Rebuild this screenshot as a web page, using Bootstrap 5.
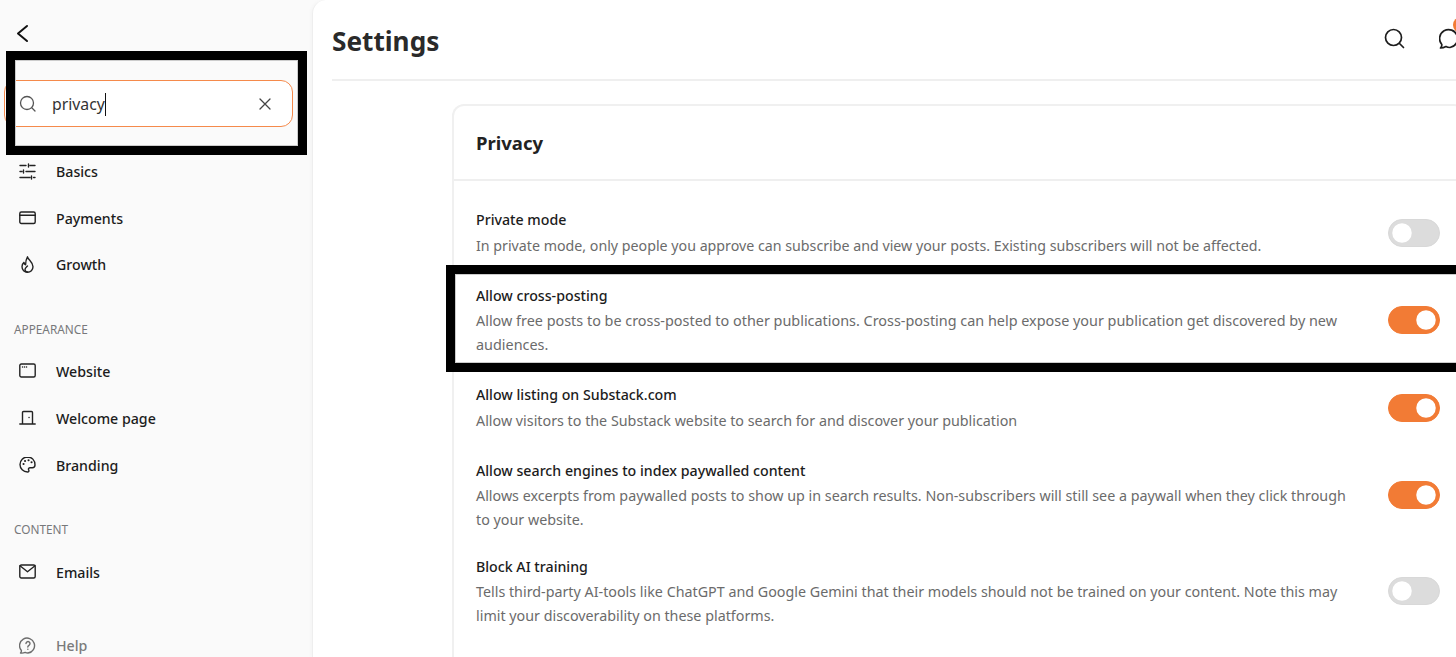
<!doctype html>
<html lang="en">
<head>
<meta charset="utf-8">
<title>Settings</title>
<link href="https://cdn.jsdelivr.net/npm/bootstrap@5.3.0/dist/css/bootstrap.min.css" rel="stylesheet">
<style>
html,body{height:657px;overflow:hidden}
body{font-family:"Noto Sans","Open Sans",sans-serif;background:#fafafa;color:#1f1f1f;position:relative}
.shell{height:657px}
.side{width:312px;flex:none;background:#fafafa;padding-top:22px}
.back{height:22px;padding-left:15px;line-height:0}
.searchbar{margin:36px 19px 0 4px;height:47px;background:#fff;border:1px solid #f58a4b;border-radius:12px;padding-left:14px;padding-right:20px;color:#333;font-size:15.8px}
.searchbar .q{margin-left:15px;padding-top:2px}
.caret-line{display:inline-block;width:1px;height:23px;background:#111;vertical-align:-6px}
.menu{margin-top:21.5px}
.mi{height:46.5px;padding-left:19px;font-size:14.2px;font-weight:500;color:#1c1c1c;gap:20px;text-decoration:none}
.nv-b .mi{height:47px}
.mi svg{width:17px;height:17px;flex:none;stroke:#222;fill:none;stroke-width:1.4;stroke-linecap:round;stroke-linejoin:round}
.sec{font-size:11.8px;color:#77787a;padding-left:14px;line-height:16px}
.sec-a{margin-top:33px;margin-bottom:11.4px}
.sec-c{margin-top:31.6px;margin-bottom:12px}
.mi.help{color:#7a7a7a;margin-top:27px}
.mi.help svg{stroke:#6d6d6d}
.mainp{flex:none;width:1144px;background:#fff;border-left:1px solid #eee;border-top-left-radius:14px;box-shadow:-2px 0 3px rgba(0,0,0,.02);padding:0 0 0 19px;height:657px;overflow:hidden}
.head{height:81px;border-bottom:2px solid #efefef;padding-top:20px}
.head h1{font-size:26.2px;font-weight:700;margin:0;color:#2a2a2a;line-height:42px}
.head-ic{position:absolute;top:28px;left:1384px;display:flex;gap:34px}
.head-ic svg{width:21px;height:21px;flex:none;fill:none;stroke:#1d1d1d;stroke-width:1.7;stroke-linecap:round;stroke-linejoin:round}
.dot{position:absolute;left:1453px;top:17px;width:16px;height:16px;border-radius:50%;background:#f27b35}
.panel{margin:23px 0 0 120px;width:1014px;border:2px solid #f0f0f0;border-radius:12px 12px 0 0;border-bottom:0}
.panel-h{height:75px;border-bottom:2px solid #efefef;padding-left:22px;padding-top:2px}
.panel-h h2{font-size:18.5px;font-weight:700;color:#222;margin:0}
.rows{padding:26px 24px 60px 22px}
.rw{margin-bottom:26px;align-items:center}
.rw.wide{margin-bottom:25px}
.rw.wide .rw-t{margin-bottom:2px}
.rw.mid{margin-bottom:26px}
.rw.tight{margin-bottom:22px}
.rw-t{font-size:14.2px;font-weight:500;color:#1c1c1c;line-height:25px;margin-bottom:1px}
.rw-d{font-size:14.3px;color:#6b6b6b;line-height:24px}
.first .rw-d{font-size:14.23px}
.mid .rw-d{font-size:14.4px;line-height:23.5px}
.rw-b{width:870px;flex:none}
.tg{padding:0;min-height:0;margin:0 0 0 auto;line-height:0}
.tg .form-check-input{width:52px;height:28px;margin:0;float:none;background-color:#dcdcdc;border:1px solid #d8d8d8;box-shadow:none;background-image:url("data:image/svg+xml,%3csvg xmlns='http://www.w3.org/2000/svg' viewBox='-4 -4 8 8'%3e%3ccircle r='3' fill='%23fff'/%3e%3c/svg%3e")}
.tg .form-check-input:checked{background-color:#f27b35;border-color:#f27b35}
.anno{position:absolute;border:9px solid #000;pointer-events:none;box-shadow:inset 0 0 0 1px #ccc}
.anno-a{left:6px;top:51px;width:301px;height:104px}
.anno-b{left:446px;top:265px;width:1020px;height:107px}
</style>
</head>
<body>
<div class="d-flex shell">
  <aside class="side">
    <div class="back"><svg width="14" height="22" viewBox="0 0 14 22" fill="none" stroke="#111" stroke-width="2" stroke-linecap="round" stroke-linejoin="round"><path d="M12 4 3 11.500 12 19"/></svg></div>
    <div class="searchbar d-flex align-items-center">
      <svg width="18" height="18" viewBox="0 0 18 18" fill="none" stroke="#555" stroke-width="1.300" stroke-linecap="round"><circle cx="8" cy="8" r="6.500"/><path d="m13 13 3 3"/></svg>
      <span class="q">privacy<span class="caret-line"></span></span>
      <svg class="ms-auto" width="14" height="14" viewBox="0 0 14 14" fill="none" stroke="#444" stroke-width="1.300" stroke-linecap="round"><path d="m2 2 10 10M12 2 2 12"/></svg>
    </div>
    <nav class="nav flex-column menu">
      <a class="mi d-flex align-items-center" href="#"><svg viewBox="0 0 17 17"><path d="M1 2.500h6M11 2.500h5M9.500 1v3M1 8.500h2M7 8.500h9M4.500 7v3M1 14.500h10M14.500 14.500h1.500M12.500 13v3"/></svg>Basics</a>
      <a class="mi d-flex align-items-center" href="#"><svg viewBox="0 0 17 17"><rect x=".8" y="2" width="15.400" height="11.500" rx="1.500"/><path d="M.8 5.200h15.400"/></svg>Payments</a>
      <a class="mi d-flex align-items-center" href="#"><svg viewBox="0 0 17 17"><path d="M8.500 .8c.5 3 5.500 5 5.500 10a5.500 5.500 0 0 1-11 0c0-2 .8-3.400 2-4.400.2 1.300.8 2.100 1.600 2.400C6.600 6 7.300 2.800 8.500 .8Z"/><path d="M8.500 16c-1.500 0-2.500-1.200-2.500-2.500 0-1.300 1.300-2.200 2.500-3.500"/></svg>Growth</a>
    </nav>
    <div class="sec sec-a">APPEARANCE</div>
    <nav class="nav flex-column nv-b">
      <a class="mi d-flex align-items-center" href="#"><svg viewBox="0 0 17 17"><rect x=".8" y="1" width="15.400" height="13" rx="1.500"/><path d="M3.500 4h.1M5.500 4h.1M7.500 4h.1"/></svg>Website</a>
      <a class="mi d-flex align-items-center" href="#"><svg viewBox="0 0 17 17"><path d="M3.500 14V2.500a1 1 0 0 1 1-1h8a1 1 0 0 1 1 1V14M.8 14h15.400M10 7.500h.1"/></svg>Welcome page</a>
      <a class="mi d-flex align-items-center" href="#"><svg viewBox="0 1 17 17"><path d="M8.500 1a7.500 7.500 0 0 0 0 15c1.300 0 1.700-1 1.200-2-.6-1.200.1-2.300 1.400-2.300h2.200c1.600 0 2.700-1.100 2.700-2.700C16 4 12.800 1 8.500 1Z"/><path d="M4.500 8h.1M6 5h.1M9.500 4.200h.1M12.500 6.200h.1" stroke-width="2"/></svg>Branding</a>
    </nav>
    <div class="sec sec-c">CONTENT</div>
    <nav class="nav flex-column">
      <a class="mi d-flex align-items-center" href="#"><svg viewBox="0 0 17 17"><rect x=".8" y="1" width="15.400" height="13" rx="1.500"/><path d="m1 1.800 7.500 6 7.500-6"/></svg>Emails</a>
      <a class="mi help d-flex align-items-center" href="#"><svg viewBox="0 0 17 17"><path d="M1.500 16c.8-.8 1-1.500.9-2.500A7.500 7.500 0 1 1 9 16c-1 0-2-.2-2.800-.6-1.400.6-3 .8-4.700.6Z"/><path d="M7 6.500a2 2 0 1 1 3 1.800c-.8.500-1.200.9-1.200 1.700M8.800 12.200h.1"/></svg>Help</a>
    </nav>
  </aside>
  <main class="mainp">
    <header class="head"><h1>Settings</h1></header>
    <section class="panel">
      <div class="panel-h d-flex align-items-center"><h2>Privacy</h2></div>
      <div class="rows">
        <div class="rw wide first d-flex">
          <div class="rw-b"><div class="rw-t">Private mode</div><div class="rw-d">In private mode, only people you approve can subscribe and view your posts. Existing subscribers will not be affected.</div></div>
          <div class="form-check form-switch tg"><input class="form-check-input" type="checkbox" role="switch" aria-label="Private mode"></div>
        </div>
        <div class="rw mid d-flex">
          <div class="rw-b"><div class="rw-t">Allow cross-posting</div><div class="rw-d">Allow free posts to be cross-posted to other publications. Cross-posting can help expose your publication get discovered by new audiences.</div></div>
          <div class="form-check form-switch tg"><input class="form-check-input" type="checkbox" role="switch" checked aria-label="Allow cross-posting"></div>
        </div>
        <div class="rw wide d-flex">
          <div class="rw-b"><div class="rw-t">Allow listing on Substack.com</div><div class="rw-d">Allow visitors to the Substack website to search for and discover your publication</div></div>
          <div class="form-check form-switch tg"><input class="form-check-input" type="checkbox" role="switch" checked aria-label="Allow listing on Substack.com"></div>
        </div>
        <div class="rw tight d-flex">
          <div class="rw-b"><div class="rw-t">Allow search engines to index paywalled content</div><div class="rw-d">Allows excerpts from paywalled posts to show up in search results. Non-subscribers will still see a paywall when they click through to your website.</div></div>
          <div class="form-check form-switch tg"><input class="form-check-input" type="checkbox" role="switch" checked aria-label="Allow search engines to index paywalled content"></div>
        </div>
        <div class="rw d-flex">
          <div class="rw-b"><div class="rw-t">Block AI training</div><div class="rw-d">Tells third-party AI-tools like ChatGPT and Google Gemini that their models should not be trained on your content. Note this may limit your discoverability on these platforms.</div></div>
          <div class="form-check form-switch tg"><input class="form-check-input" type="checkbox" role="switch" aria-label="Block AI training"></div>
        </div>
      </div>
    </section>
  </main>
</div>
<div class="head-ic">
  <svg viewBox="0 0 21 21"><circle cx="9.500" cy="9.500" r="8"/><path d="m15.500 15.500 4 4"/></svg>
  <svg viewBox="0 0 21 21"><path d="M1.500 20c1-1 1.500-2 1.300-3.500A9 9 0 1 1 11 19.500c-1.500 0-3-.3-4-1-1.600.9-3.500 1.500-5.500 1.500Z"/></svg>
</div>
<span class="dot"></span>
<div class="anno anno-a"></div>
<div class="anno anno-b"></div>
</body>
</html>
